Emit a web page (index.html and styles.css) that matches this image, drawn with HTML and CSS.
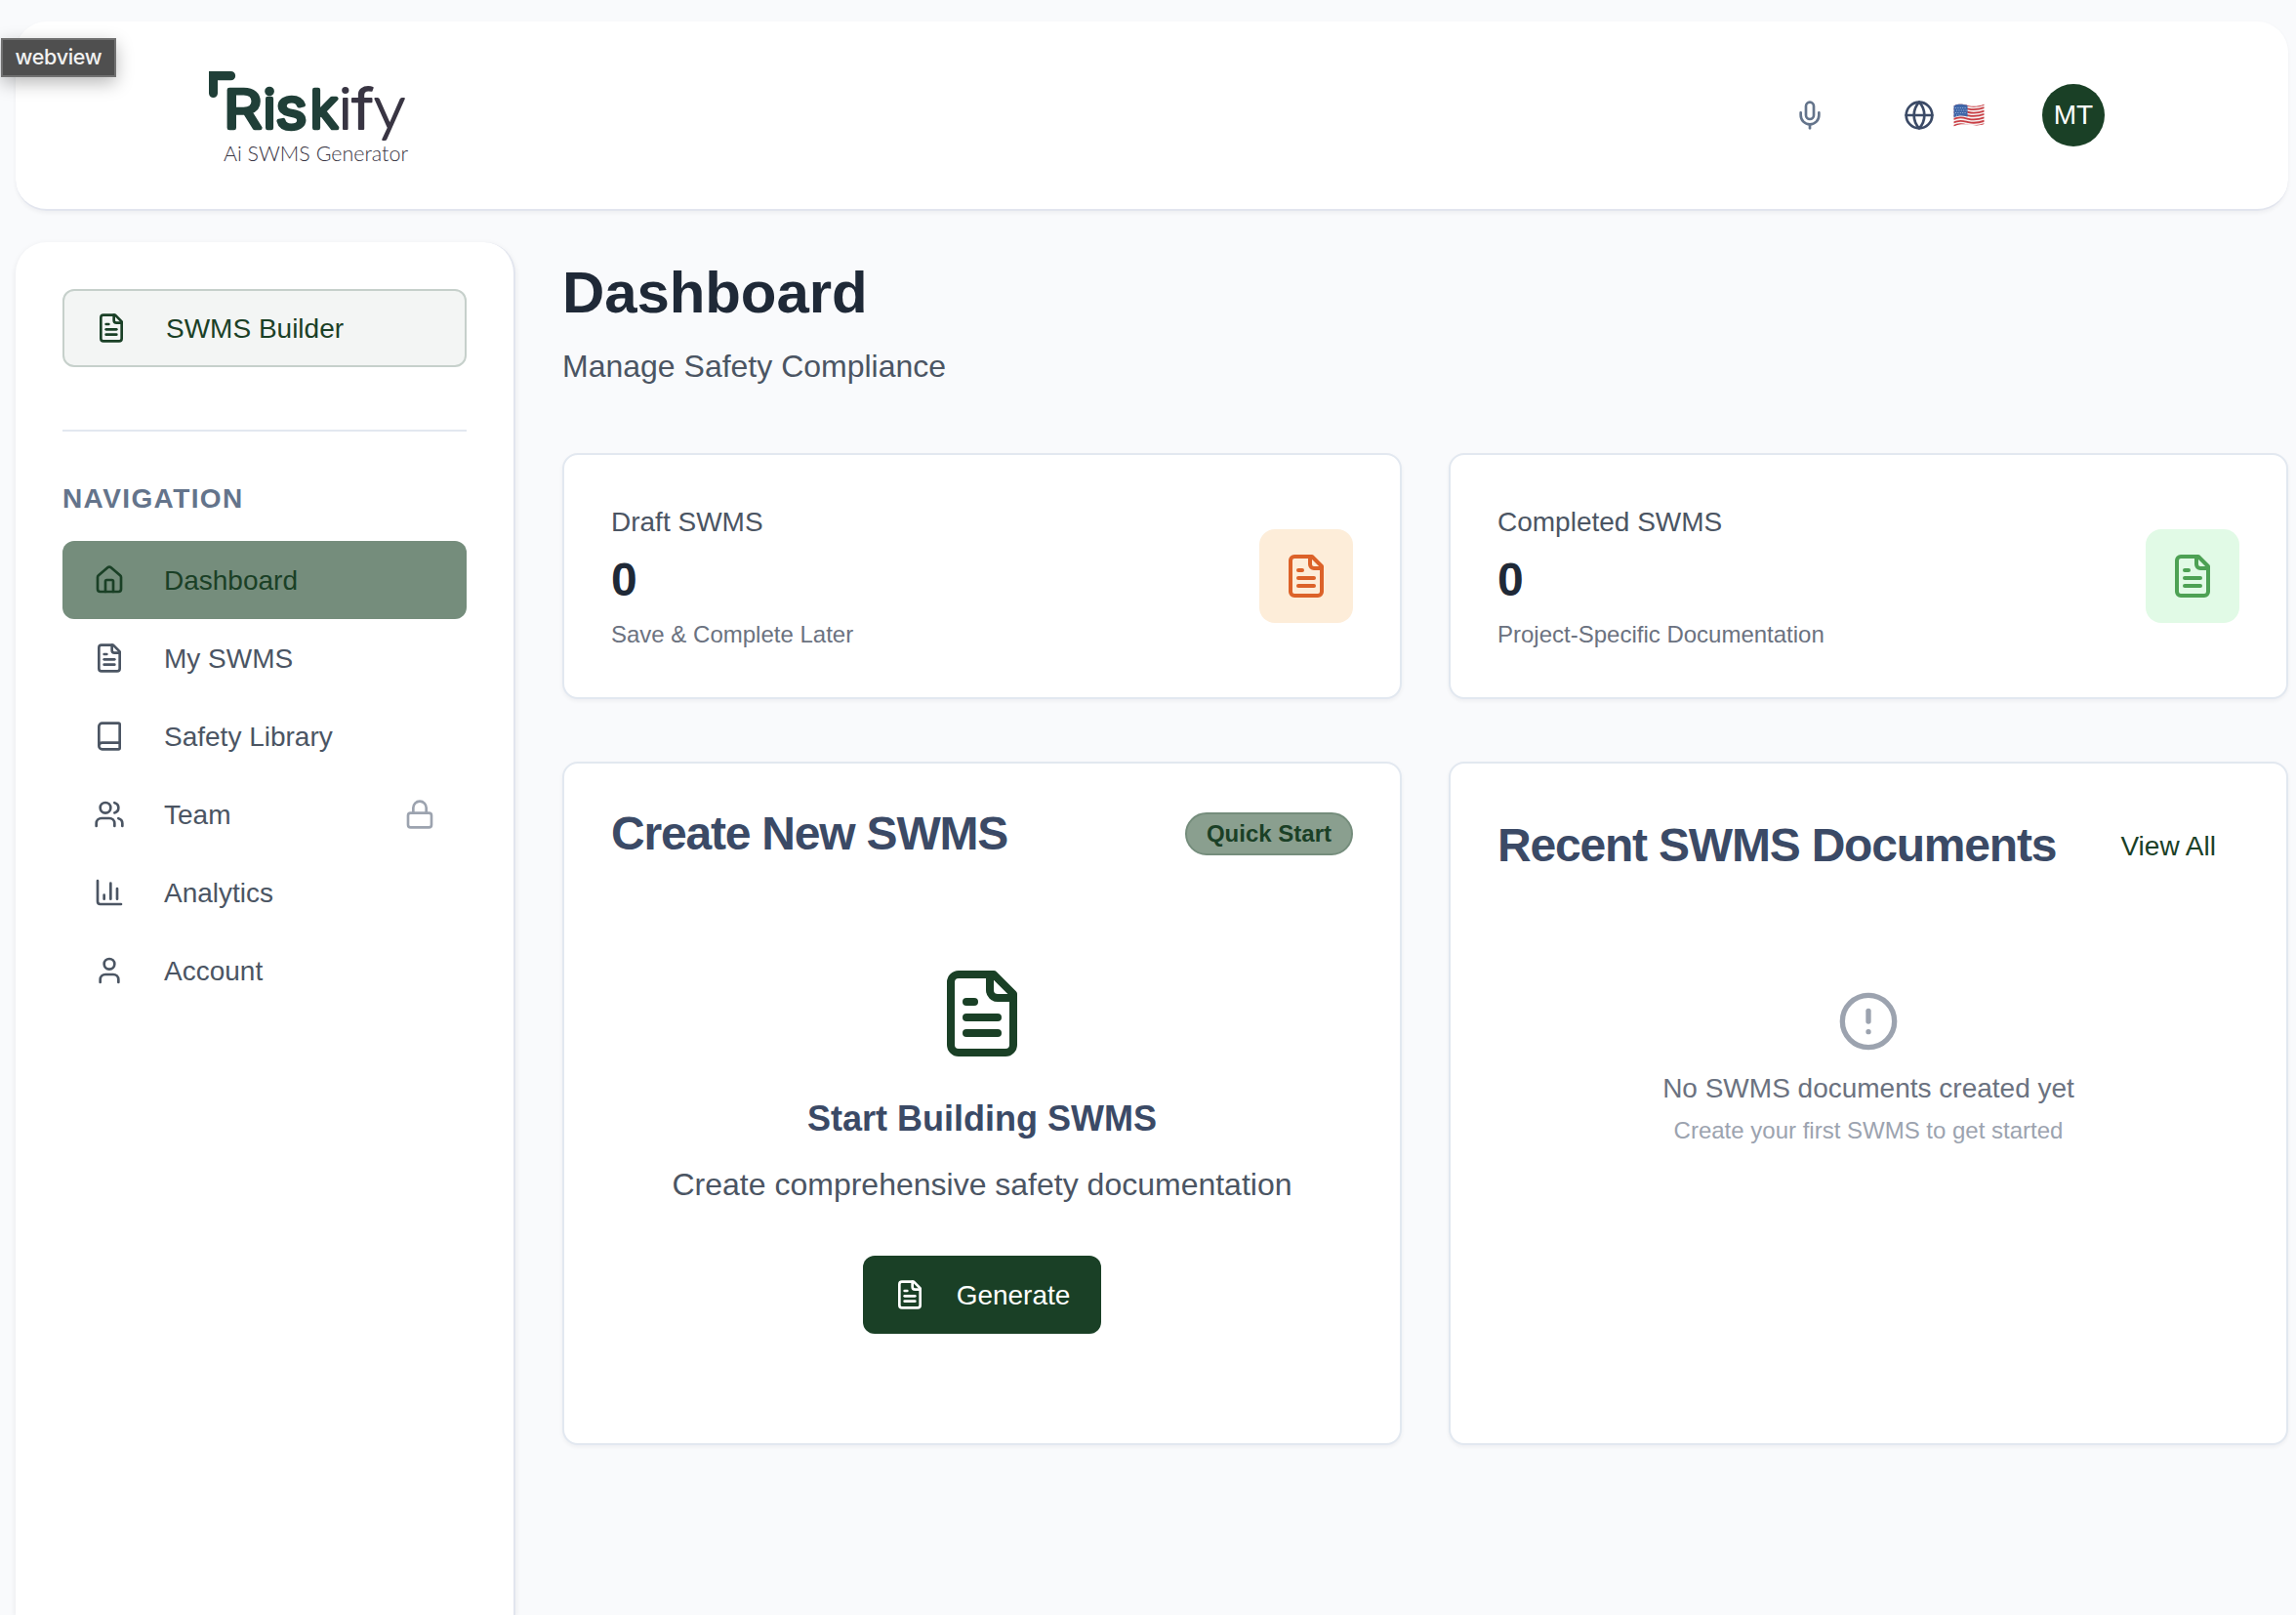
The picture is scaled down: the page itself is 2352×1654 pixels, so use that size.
FILE: index.html
```html
<!DOCTYPE html>
<html lang="en">
<head>
<meta charset="utf-8">
<title>Riskify - Dashboard</title>
<link rel="stylesheet" href="styles.css">
</head>
<body>
<svg class="sprite" aria-hidden="true">
  <symbol id="file" viewBox="0 0 24 24"><path d="M15 2H6a2 2 0 0 0-2 2v16a2 2 0 0 0 2 2h12a2 2 0 0 0 2-2V7Z"/><path d="M14 2v4a2 2 0 0 0 2 2h4"/><path d="M10 9H8"/><path d="M16 13H8"/><path d="M16 17H8"/></symbol>
  <symbol id="house" viewBox="0 0 24 24"><path d="M15 21v-8a1 1 0 0 0-1-1h-4a1 1 0 0 0-1 1v8"/><path d="M3 10a2 2 0 0 1 .709-1.528l7-5.999a2 2 0 0 1 2.582 0l7 5.999A2 2 0 0 1 21 10v9a2 2 0 0 1-2 2H5a2 2 0 0 1-2-2z"/></symbol>
  <symbol id="book" viewBox="0 0 24 24"><path d="M4 19.5v-15A2.5 2.5 0 0 1 6.500 2H19a1 1 0 0 1 1 1v18a1 1 0 0 1-1 1H6.500a1 1 0 0 1 0-5H20"/></symbol>
  <symbol id="users" viewBox="0 0 24 24"><path d="M16 21v-2a4 4 0 0 0-4-4H6a4 4 0 0 0-4 4v2"/><circle cx="9" cy="7" r="4"/><path d="M22 21v-2a4 4 0 0 0-3-3.870"/><path d="M16 3.130a4 4 0 0 1 0 7.750"/></symbol>
  <symbol id="chart" viewBox="0 0 24 24"><path d="M3 3v16a2 2 0 0 0 2 2h16"/><path d="M18 17V9"/><path d="M13 17V5"/><path d="M8 17v-3"/></symbol>
  <symbol id="user" viewBox="0 0 24 24"><path d="M19 21v-2a4 4 0 0 0-4-4H9a4 4 0 0 0-4 4v2"/><circle cx="12" cy="7" r="4"/></symbol>
  <symbol id="lock" viewBox="0 0 24 24"><rect x="3" y="11" width="18" height="11" rx="2"/><path d="M7 11V7a5 5 0 0 1 10 0v4"/></symbol>
  <symbol id="mic" viewBox="0 0 24 24"><path d="M12 2a3 3 0 0 0-3 3v7a3 3 0 0 0 6 0V5a3 3 0 0 0-3-3Z"/><path d="M19 10v2a7 7 0 0 1-14 0v-2"/><path d="M12 19v3"/></symbol>
  <symbol id="globe" viewBox="0 0 24 24"><circle cx="12" cy="12" r="10"/><path d="M12 2a14.500 14.500 0 0 0 0 20 14.500 14.500 0 0 0 0-20"/><path d="M2 12h20"/></symbol>
  <symbol id="alert" viewBox="0 0 24 24"><circle cx="12" cy="12" r="10"/><path d="M12 8v4"/><path d="M12 16h.010"/></symbol>
</svg>

<div class="tooltip">webview</div>

<header class="topbar">
  <svg class="logo" viewBox="0 0 208 100" role="img" aria-label="Riskify Ai SWMS Generator">
    <path class="corner" d="M0 0H22.500a4.500 4.500 0 0 1 0 9.300H9V22.500a4.500 4.500 0 0 1-9 0Z"/>
    <g class="word risk">
      <text transform="translate(34.800 58) scale(1.140 1)">R</text>
      <text transform="translate(62 58)">i</text>
      <text transform="translate(84.500 58) scale(1.140 1.030)">s</text>
      <text transform="translate(118 58)">k</text>
    </g>
    <g class="word ify">
      <text transform="translate(139.700 59)">i</text>
      <text transform="translate(157.500 59) scale(1.150 1)">f</text>
      <text class="tail" transform="translate(185 59)">y</text>
    </g>
    <text class="tagline" x="15" y="92" textLength="189" lengthAdjust="spacingAndGlyphs">Ai SWMS Generator</text>
  </svg>
  <div class="tools">
    <svg class="icon mic"><use href="#mic"/></svg>
    <div class="language">
      <svg class="icon"><use href="#globe"/></svg>
      <svg class="flag" viewBox="0 0 32 24">
        <defs><clipPath id="wave"><path d="M.5 2.500C6-.2 10 1 15.500 2.200S26 2.800 31.500.7V21C26 23.200 21 22.300 15.500 21.600S5 21.200.5 23.500Z"/></clipPath></defs>
        <g clip-path="url(#wave)">
          <path fill="#f6f1f1" d="M0 0h32v24H0z"/>
          <g class="stripes">
            <path d="M0 2.500C6-.2 10 1 15.500 2.200S26 2.800 32 .7"/>
            <path d="M0 5.900C6 3.200 10 4.400 15.500 5.600S26 6.200 32 4.100"/>
            <path d="M0 9.300C6 6.600 10 7.800 15.500 9S26 9.600 32 7.500"/>
            <path d="M0 12.700C6 10 10 11.200 15.500 12.400S26 13 32 10.900"/>
            <path d="M0 16.100C6 13.400 10 14.600 15.500 15.800S26 16.400 32 14.300"/>
            <path d="M0 19.500C6 16.800 10 18 15.500 19.200S26 19.800 32 17.700"/>
            <path d="M0 22.900C6 20.200 10 21.400 15.500 22.600S26 23.200 32 21.100"/>
          </g>
          <path fill="#3f66a8" d="M0 0h14.500v13.500C10 12.300 6 12 0 14.500z"/>
          <path class="stars" d="M2 4.500h12M3 7h11M2 9.500h12M3 12h5"/>
        </g>
      </svg>
    </div>
    <div class="avatar">MT</div>
  </div>
</header>

<div class="layout">
  <aside class="sidebar">
    <a class="builder"><svg class="icon"><use href="#file"/></svg><span class="label">SWMS Builder</span></a>
    <hr class="divider">
    <h2 class="nav-title">NAVIGATION</h2>
    <nav class="nav">
      <a class="nav-item active"><svg class="icon"><use href="#house"/></svg><span class="label">Dashboard</span></a>
      <a class="nav-item"><svg class="icon"><use href="#file"/></svg><span class="label">My SWMS</span></a>
      <a class="nav-item"><svg class="icon"><use href="#book"/></svg><span class="label">Safety Library</span></a>
      <a class="nav-item"><svg class="icon"><use href="#users"/></svg><span class="label">Team</span><svg class="icon lock"><use href="#lock"/></svg></a>
      <a class="nav-item"><svg class="icon"><use href="#chart"/></svg><span class="label">Analytics</span></a>
      <a class="nav-item"><svg class="icon"><use href="#user"/></svg><span class="label">Account</span></a>
    </nav>
  </aside>

  <main class="main">
    <h1 class="title">Dashboard</h1>
    <p class="subtitle">Manage Safety Compliance</p>

    <div class="grid stats">
      <section class="card stat">
        <div>
          <p class="stat-label">Draft SWMS</p>
          <p class="stat-value">0</p>
          <p class="stat-note">Save &amp; Complete Later</p>
        </div>
        <div class="tile orange"><svg class="icon"><use href="#file"/></svg></div>
      </section>
      <section class="card stat">
        <div>
          <p class="stat-label">Completed SWMS</p>
          <p class="stat-value">0</p>
          <p class="stat-note">Project-Specific Documentation</p>
        </div>
        <div class="tile green"><svg class="icon"><use href="#file"/></svg></div>
      </section>
    </div>

    <div class="grid panels">
      <section class="card panel">
        <div class="panel-head">
          <h2 class="panel-title">Create New SWMS</h2>
          <span class="badge">Quick Start</span>
        </div>
        <div class="panel-body">
          <svg class="icon hero"><use href="#file"/></svg>
          <h3 class="start-title">Start Building SWMS</h3>
          <p class="start-text">Create comprehensive safety documentation</p>
          <button class="generate"><svg class="icon"><use href="#file"/></svg><span class="label">Generate</span></button>
        </div>
      </section>
      <section class="card panel">
        <div class="panel-head">
          <h2 class="panel-title">Recent SWMS Documents</h2>
          <a class="view-all">View All</a>
        </div>
        <div class="panel-body">
          <svg class="icon empty"><use href="#alert"/></svg>
          <p class="empty-title">No SWMS documents created yet</p>
          <p class="empty-text">Create your first SWMS to get started</p>
        </div>
      </section>
    </div>
  </main>
</div>
</body>
</html>
```
FILE: styles.css
```css
* { box-sizing: border-box; margin: 0; padding: 0; }

body {
  height: 1654px;
  padding: 22px 8px 0 16px;
  overflow: hidden;
  display: flex;
  flex-direction: column;
  background: #f9fafc;
  color: #4b5563;
  font: 28px/40px "Liberation Sans", Arial, sans-serif;
}

.sprite { position: absolute; width: 0; height: 0; }

.icon {
  width: 32px;
  height: 32px;
  flex: none;
  fill: none;
  stroke: currentColor;
  stroke-width: 2;
  stroke-linecap: round;
  stroke-linejoin: round;
}
.label { padding-top: 2px; }

.tooltip {
  position: absolute;
  left: 1px;
  top: 39px;
  width: 118px;
  height: 40px;
  border: 2px solid #707070;
  background: #4f4f4f;
  color: #f2f2f2;
  font: 500 21.500px/35px Inter, sans-serif;
  letter-spacing: -.3px;
  text-align: center;
  box-shadow: 0 6px 18px rgba(0, 0, 0, .28);
}

/* Top bar */
.topbar {
  flex: none;
  height: 194px;
  padding: 0 188px 0 198px;
  display: flex;
  justify-content: space-between;
  align-items: center;
  background: #fff;
  border-bottom: 2px solid #e2e5ee;
  border-radius: 32px;
  box-shadow: 0 2px 4px rgba(15, 23, 42, .05);
}
.logo { width: 208px; height: 100px; margin-top: 10px; overflow: visible; }
.corner { fill: #203f38; }
.word { font-family: Inter, sans-serif; font-weight: 300; stroke-linejoin: round; text-anchor: middle; }
.risk { font-size: 54px; fill: #203f38; stroke: #203f38; stroke-width: 4.500; }
.ify { font-size: 56px; fill: #393543; stroke: #393543; stroke-width: 1.800; }
.tail { font-family: Lato, sans-serif; font-size: 64px; }
.tagline { font: 300 21.500px Lato, sans-serif; fill: #393543; }

.tools { display: flex; align-items: center; }
.mic { color: #64748b; margin-right: 80px; }
.language { display: flex; align-items: center; gap: 19px; color: #3b4a66; margin-right: 59px; }
.flag { width: 32px; height: 24px; }
.stripes { fill: none; stroke: #c93f45; stroke-width: 1.800; }
.stars { fill: none; stroke: #a9bde0; stroke-width: .9; stroke-dasharray: 1 1.400; }
.avatar {
  width: 64px;
  height: 64px;
  border-radius: 50%;
  background: #1a4026;
  color: #fff;
  line-height: 64px;
  text-align: center;
}

/* Sidebar */
.layout { flex: 1; display: flex; gap: 48px; padding-top: 32px; min-height: 0; }
.sidebar {
  flex: none;
  width: 512px;
  padding: 48px;
  background: #fff;
  border-right: 2px solid #e2e5ee;
  border-radius: 32px 32px 0 0;
  box-shadow: 0 2px 6px rgba(15, 23, 42, .08);
}
.builder, .nav-item { display: flex; align-items: center; gap: 40px; height: 80px; padding: 0 32px; border-radius: 12px; }
.builder { width: 414px; border: 2px solid #c6d0cb; background: #f3f5f4; color: #1a4026; }
.divider { width: 414px; border: 0; border-top: 2px solid #e2e8f0; margin: 64px 0 49px; }
.nav-title { color: #64748b; font-size: 28px; line-height: 40px; letter-spacing: 1.400px; margin-bottom: 23px; }
.nav { width: 414px; }
.nav-item.active { background: #758d7c; color: #1a4026; }
.lock { margin-left: auto; color: #9ca3af; }

/* Main column */
.main { flex: 1; min-width: 0; padding-top: 16px; }
.title { color: #1f2937; font-size: 60px; line-height: 72px; letter-spacing: -.1px; }
.subtitle { font-size: 32px; line-height: 48px; margin-top: 15px; }
.grid { display: grid; grid-template-columns: 1fr 1fr; gap: 48px; }
.stats { margin-top: 65px; }
.panels { margin-top: 64px; }
.card {
  padding: 48px;
  background: #fff;
  border: 2px solid #e2e8f0;
  border-radius: 16px;
  box-shadow: 0 2px 4px rgba(15, 23, 42, .05);
}
.stat { height: 252px; display: flex; justify-content: space-between; align-items: center; }
.stat-label { padding-top: 1px; }
.stat-value { color: #1f2937; font-size: 48px; font-weight: 700; line-height: 64px; margin: 7px 0 8px; }
.stat-note { color: #6b7280; font-size: 24px; line-height: 32px; }
.tile { width: 96px; height: 96px; border-radius: 16px; display: grid; place-items: center; }
.tile .icon { width: 48px; height: 48px; }
.orange { background: #fdedd9; color: #dc6229; }
.green { background: #e1fae6; color: #4da154; }

.panel { height: 700px; }
.panel-head { display: flex; justify-content: space-between; align-items: center; }
.panel-title { color: #3b4a66; font-size: 48px; line-height: 48px; letter-spacing: -1.200px; }
.badge {
  padding: 4px 20px;
  border: 2px solid #758d7c;
  border-radius: 22px;
  background: #8a9f8f;
  color: #1a4026;
  font-size: 24px;
  font-weight: 700;
  line-height: 32px;
}
.view-all { padding: 17px 24px 15px; color: #1a4026; }
.panel-body { display: flex; flex-direction: column; align-items: center; padding-top: 112px; }
.hero { width: 96px; height: 96px; color: #1a4026; }
.start-title { margin-top: 32px; color: #3b4a66; font-size: 36px; line-height: 56px; }
.start-text { margin: 15px 0 49px; font-size: 32px; line-height: 48px; }
.generate {
  display: flex;
  align-items: center;
  gap: 32px;
  height: 80px;
  padding: 0 32px;
  border: 0;
  border-radius: 12px;
  background: #1a4026;
  color: #fff;
  font: inherit;
}
.empty { width: 64px; height: 64px; color: #9ca3af; }
.empty-title { margin-top: 17px; color: #6b7280; }
.empty-text { margin-top: 7px; color: #9ca3af; font-size: 24px; line-height: 32px; }
```
